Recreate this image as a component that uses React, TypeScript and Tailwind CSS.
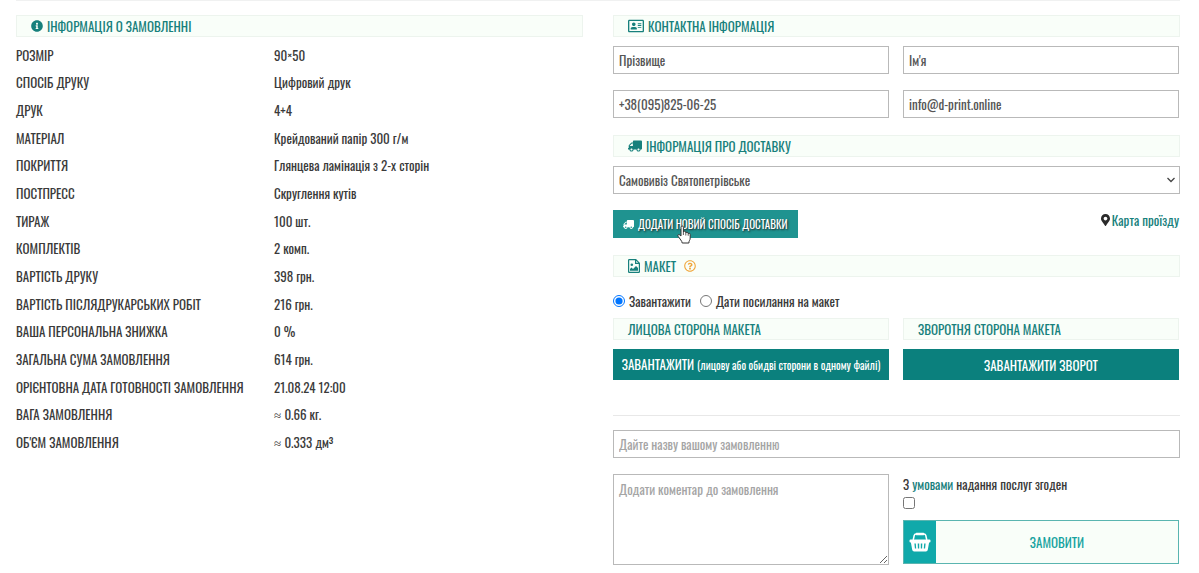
import type { ReactNode } from 'react';
import {
  FaInfoCircle,
  FaMapMarkerAlt,
  FaRegAddressCard,
  FaRegQuestionCircle,
  FaTruck,
} from 'react-icons/fa';

const approx = <span className="font-['Liberation_Serif',serif] leading-none">≈ </span>;

const details: [string, ReactNode][] = [
  ['РОЗМІР', '90×50'],
  ['СПОСІБ ДРУКУ', 'Цифровий друк'],
  ['ДРУК', '4+4'],
  ['МАТЕРІАЛ', 'Крейдований папір 300 г/м'],
  ['ПОКРИТТЯ', 'Глянцева ламінація з 2-х сторін'],
  ['ПОСТПРЕСС', 'Скруглення кутів'],
  ['ТИРАЖ', '100 шт.'],
  ['КОМПЛЕКТІВ', '2 комп.'],
  ['ВАРТІСТЬ ДРУКУ', '398 грн.'],
  ['ВАРТІСТЬ ПІСЛЯДРУКАРСЬКИХ РОБІТ', '216 грн.'],
  ['ВАША ПЕРСОНАЛЬНА ЗНИЖКА', '0 %'],
  ['ЗАГАЛЬНА СУМА ЗАМОВЛЕННЯ', '614 грн.'],
  ['ОРІЄНТОВНА ДАТА ГОТОВНОСТІ ЗАМОВЛЕННЯ', '21.08.24 12:00'],
  ['ВАГА ЗАМОВЛЕННЯ', <>{approx}0.66 кг.</>],
  ["ОБ'ЄМ ЗАМОВЛЕННЯ", <>{approx}0.333 дм<sup className="text-[9px] font-medium leading-none">3</sup></>],
];

const field =
  'block h-7 w-full border border-[#b9b9b9] bg-white px-[5px] text-[13px] text-[#555] outline-none placeholder:text-[#a5a5a5]';

function SectionTitle({ icon, children }: { icon?: ReactNode; children: ReactNode }) {
  return (
    <h2 className="flex h-[22px] items-center gap-1 border border-[#edf4ee] bg-[#f9fef9] px-[14px] text-[13px] leading-5 text-[#17807c]">
      {icon}
      {children}
    </h2>
  );
}

function ImageFileIcon() {
  return (
    <svg viewBox="0 0 12 14" className="h-[14px] w-3" aria-hidden="true">
      <path
        d="M.6 1.200q0-.6.6-.6h6.600l3.600 3.600v8.600q0 .6-.6.6H1.200q-.6 0-.6-.6zM7.600.6v3.800h3.800"
        fill="none"
        stroke="currentColor"
        strokeWidth="1.200"
      />
      <circle cx="3.800" cy="5.800" r="1.300" fill="currentColor" />
      <path d="M2 11.800v-1.700l1.500-1.500L5 10l3-3 2 2v2.800z" fill="currentColor" />
    </svg>
  );
}

function BasketIcon() {
  return (
    <svg viewBox="0 0 22 20" className="h-5 w-[22px]" fill="none" aria-hidden="true">
      <path d="M4.200 8l1-4.500Q5.500 2 7.200 2h7.600q1.700 0 2 1.500l1 4.500" stroke="#fff" strokeWidth="1.500" />
      <path d="M7.500.8h7q.8 0 .8.8v.8q0 .8-.8.8h-7q-.8 0-.8-.8v-.8q0-.8.8-.8z" fill="#fff" />
      <path
        fillRule="evenodd"
        d="M1.500 7.500h19q1 0 1 1v1q0 1-1 1h-.4l-1.300 7.300q-.3 1.700-1.900 1.700H5.100q-1.600 0-1.900-1.700L1.900 10.500h-.4q-1 0-1-1v-1q0-1 1-1zM5.400 11.500l.5 5h1.300l-.4-5zM8.700 11.500l.2 5h1.300v-5zM11.800 11.500v5h1.300l.2-5zM15.200 11.500l-.4 5h1.300l.5-5z"
        fill="#fff"
      />
    </svg>
  );
}

function HandPointer() {
  return (
    <svg viewBox="0 0 14 19" className="pointer-events-none absolute left-[64px] top-[15px] h-[19px] w-[14px]" aria-hidden="true">
      <path
        d="M4 11V2.200Q4 1 5.200 1t1.200 1.200V7q.2-.8 1.200-.8T8.800 7.400V8q.2-.8 1.200-.8t1.200 1.200v.5q.3-.6 1-.6 1 0 1 1.200V13q0 1.500-.8 2.700-.5.800-.5 2.300H5.200q-.2-1.500-1.400-3L1.200 11.400q-.8-1 0-1.600.8-.6 1.600.2z"
        fill="#fff"
        stroke="#333"
        strokeWidth="1"
        strokeLinejoin="round"
      />
      <path d="M6.400 7v3M8.800 8v2.500M11.200 8.800v2" stroke="#333" strokeWidth="0.800" />
    </svg>
  );
}

export default function App() {
  return (
    <main className="bg-white pl-4 pr-[19px] font-['Oswald','Roboto_Condensed',sans-serif] text-[13px] leading-5 text-[#3a3a3a]">
      <hr className="border-[#f0f1f1]" />
      <div className="mt-[14px] grid grid-cols-2 gap-[30px]">
        <section>
          <SectionTitle icon={<FaInfoCircle className="size-3" />}>ІНФОРМАЦІЯ О ЗАМОВЛЕННІ</SectionTitle>
          <table className="mt-1 h-[415px] w-full">
            <tbody>
              {details.map(([label, value]) => (
                <tr key={label}>
                  <th scope="row" className="w-[258px] p-0 text-left font-normal">{label}</th>
                  <td className="p-0">{value}</td>
                </tr>
              ))}
            </tbody>
          </table>
        </section>

        <form>
          <SectionTitle icon={<FaRegAddressCard className="size-4" />}>КОНТАКТНА ІНФОРМАЦІЯ</SectionTitle>
          <div className="mt-[9px] grid grid-cols-2 gap-x-[14px] gap-y-4 pr-px">
            <input aria-label="Прізвище" defaultValue="Прізвище" className={field} />
            <input aria-label="Ім'я" defaultValue="Ім'я" className={field} />
            <input aria-label="Телефон" type="tel" defaultValue="+38(095)825-06-25" className={field} />
            <input aria-label="Email" type="email" defaultValue="info@d-print.online" className={field} />
          </div>

          <div className="mt-[17px]">
            <SectionTitle icon={<FaTruck className="size-[14px] -scale-x-100" />}>ІНФОРМАЦІЯ ПРО ДОСТАВКУ</SectionTitle>
          </div>
          <div className="mt-[9px] grid items-center">
            <select
              aria-label="Спосіб доставки"
              className="col-start-1 row-start-1 h-7 w-full appearance-none border border-[#b9b9b9] bg-white px-[5px] text-[13px] text-[#555]"
            >
              <option>Самовивіз Святопетрівське</option>
            </select>
            <svg
              viewBox="0 0 8 6"
              className="pointer-events-none col-start-1 row-start-1 mr-[5px] h-[6px] w-2 justify-self-end"
              aria-hidden="true"
            >
              <path d="M.5 1L4 4.500 7.500 1" fill="none" stroke="#444" strokeWidth="1.300" />
            </svg>
          </div>

          <div className="mt-4 flex items-start justify-between">
            <button
              type="button"
              className="relative flex h-7 items-center gap-1 bg-[#1f9390] px-[10px] text-[11px] text-white [text-shadow:1px_1px_2px_#222]"
            >
              <FaTruck className="size-[11px] -scale-x-100" />
              ДОДАТИ НОВИЙ СПОСІБ ДОСТАВКИ
              <HandPointer />
            </button>
            <span className="flex items-center gap-[2px] pr-px">
              <FaMapMarkerAlt className="h-3 w-[9px] text-[#2b2b2b]" />
              <a href="#map" className="text-[#17807c]">Карта проїзду</a>
            </span>
          </div>

          <div className="mt-[17px]">
            <SectionTitle icon={<ImageFileIcon />}>
              МАКЕТ
              <FaRegQuestionCircle className="ml-1 size-3 text-[#f0a63c]" />
            </SectionTitle>
          </div>

          <div className="mt-[14px] flex h-5 items-center gap-[9px]">
            <label className="flex items-center gap-1">
              <input type="radio" name="layout" defaultChecked className="size-3" />
              Завантажити
            </label>
            <label className="flex items-center gap-1">
              <input type="radio" name="layout" className="size-3" />
              Дати посилання на макет
            </label>
          </div>

          <div className="mt-[7px] grid grid-cols-2 gap-x-[14px] gap-y-[9px] pr-px">
            <SectionTitle>ЛИЦОВА СТОРОНА МАКЕТА</SectionTitle>
            <SectionTitle>ЗВОРОТНЯ СТОРОНА МАКЕТА</SectionTitle>
            <button type="button" className="h-[31px] whitespace-nowrap bg-[#0b807d] text-white">
              ЗАВАНТАЖИТИ <span className="text-[11px]">(лицову або обидві сторони в одному файлі)</span>
            </button>
            <button type="button" className="h-[31px] bg-[#0b807d] text-white">ЗАВАНТАЖИТИ ЗВОРОТ</button>
          </div>

          <hr className="mt-[35px] border-[#e8e8e8]" />
          <input aria-label="Назва замовлення" placeholder="Дайте назву вашому замовленню" className={`${field} mt-[14px]`} />

          <div className="mt-4 grid grid-cols-2 gap-x-[14px] pr-px">
            <textarea
              aria-label="Коментар"
              placeholder="Додати коментар до замовлення"
              className="block h-[91px] w-full resize border border-[#b9b9b9] bg-white px-[5px] py-1 text-[13px] text-[#555] placeholder:text-[#a5a5a5]"
            />
            <div>
              <label htmlFor="terms" className="block">
                З <a href="#terms" className="text-[#17807c]">умовами</a> надання послуг згоден
              </label>
              <input id="terms" type="checkbox" className="mt-[3px] block size-3" />
              <button type="submit" className="mt-[11px] flex h-11 w-full items-stretch border border-[#5ab5b0] bg-[#f9fef9] text-[#17a3a0]">
                <span className="flex w-8 items-center justify-center bg-[#10a9aa]">
                  <BasketIcon />
                </span>
                <span className="flex-1 self-center">ЗАМОВИТИ</span>
              </button>
            </div>
          </div>
        </form>
      </div>
    </main>
  );
}
